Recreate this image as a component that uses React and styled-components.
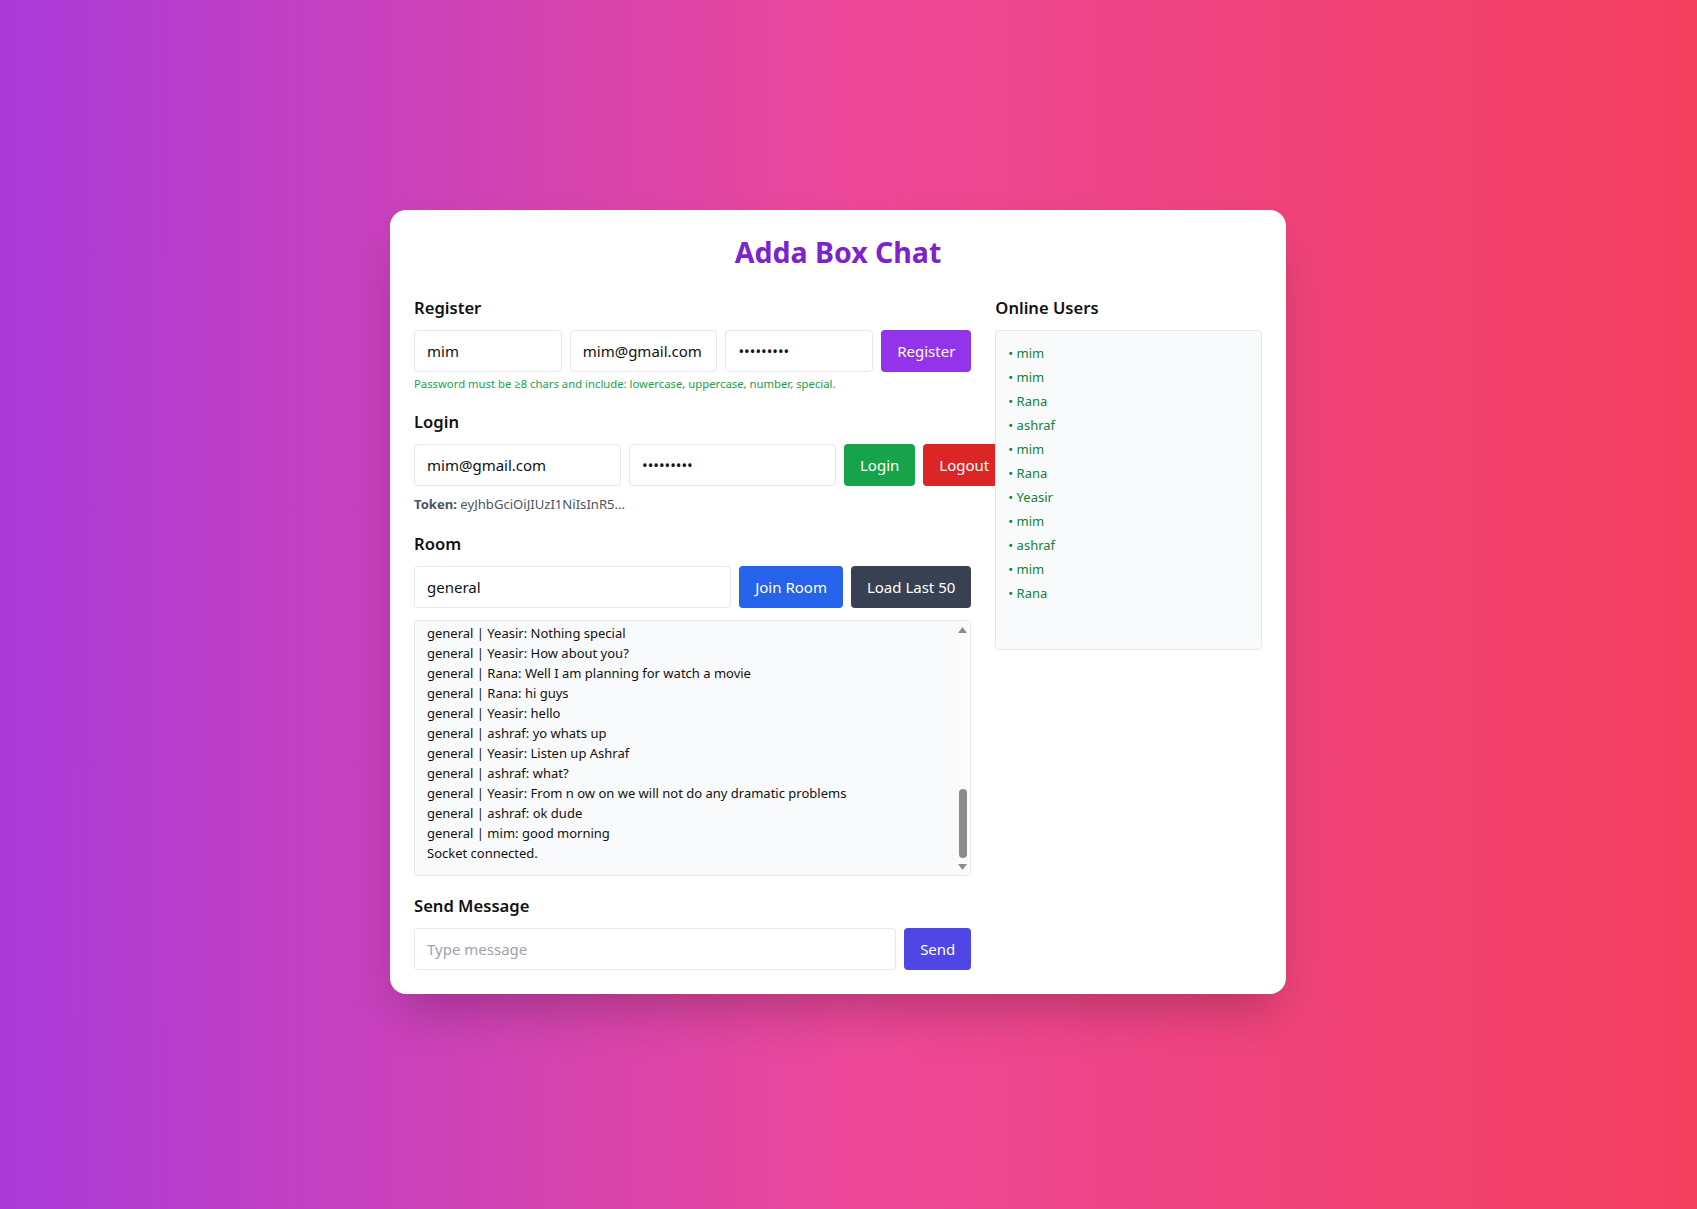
import React from "react";
import styled, { createGlobalStyle } from "styled-components";

const GlobalStyle = createGlobalStyle`
  *, *::before, *::after { box-sizing: border-box; }
  html, body { margin: 0; padding: 0; }
  body {
    font-family: "Noto Sans", "Open Sans", sans-serif;
    color: #111111;
  }
`;

const Page = styled.div`
  min-height: 100vh;
  display: flex;
  align-items: center;
  justify-content: center;
  padding: 0 21px 5px 0;
  background: linear-gradient(to right, #aa3bd9 0%, #ec4899 50%, #f43f5e 100%);
`;

const Card = styled.div`
  width: 896px;
  background: #ffffff;
  border-radius: 16px;
  padding: 24px;
  box-shadow: 0 25px 50px -12px rgba(0, 0, 0, 0.25);
`;

const Title = styled.h1`
  margin: 0 0 24px;
  text-align: center;
  font-size: 28.5px;
  line-height: 36px;
  font-weight: 700;
  color: #7e22ce;
`;

const Grid = styled.div`
  display: grid;
  grid-template-columns: repeat(3, minmax(0, 1fr));
  gap: 24px;
`;

const LeftCol = styled.div`
  grid-column: span 2;
  min-width: 0;
  display: flex;
  flex-direction: column;
  gap: 16px;
`;

const RightCol = styled.div`
  min-width: 0;
`;

const Section = styled.section``;

const SectionTitle = styled.h2`
  margin: 0 0 8px;
  font-size: 16.6px;
  line-height: 28px;
  font-weight: 600;
  color: #111111;
`;

const Row = styled.div`
  display: flex;
  gap: 8px;
`;

const Input = styled.input`
  flex: ${(p) => (p.$fixed ? `1 0 ${p.$fixed}px` : "1 1 0%")};
  min-width: 0;
  height: 42px;
  padding: 8px 12px;
  border: 1px solid #e5e7eb;
  border-radius: 4px;
  font-family: inherit;
  font-size: 15px;
  line-height: 24px;
  color: #111111;
  background: #ffffff;
  outline: none;
  &::placeholder { color: #9ca3af; }
`;

const Button = styled.button`
  flex: 0 0 auto;
  height: 42px;
  padding: 8px 16px;
  border: none;
  border-radius: 4px;
  font-family: inherit;
  font-size: 15px;
  line-height: 24px;
  color: #ffffff;
  background: ${(p) => p.$bg};
  cursor: pointer;
  white-space: nowrap;
`;

const Hint = styled.p`
  margin: 4px 0 0;
  font-size: 11.3px;
  line-height: 16px;
  color: #16a34a;
`;

const Token = styled.p`
  margin: 8px 0 0;
  font-size: 13.1px;
  line-height: 20px;
  color: #4b5563;
  & strong { font-weight: 700; }
`;

const MessageBox = styled.div`
  position: relative;
  margin-top: 12px;
  height: 256px;
  overflow: hidden;
  background: #f9fafb;
  border: 1px solid #e5e7eb;
  border-radius: 4px;
`;

const MessageList = styled.div`
  height: 100%;
  padding: 12px 27px 12px 12px;
  display: flex;
  flex-direction: column;
  justify-content: flex-end;
  font-size: 13px;
  line-height: 20px;
  color: #111111;
`;

const MessageLine = styled.div`
  white-space: nowrap;
  flex: 0 0 auto;
`;

const ScrollTrack = styled.div`
  position: absolute;
  top: 0;
  right: 0;
  bottom: 0;
  width: 15px;
  background: #fbfbfb;
  display: flex;
  flex-direction: column;
  align-items: center;
`;

const ScrollArrow = styled.svg`
  flex: 0 0 auto;
  display: block;
  margin: ${(p) => (p.$down ? "3px 0 5px" : "6px 0 3px")};
`;

const ScrollSpace = styled.div`
  flex: 1 1 auto;
  width: 100%;
  display: flex;
  flex-direction: column;
  justify-content: flex-end;
  align-items: center;
`;

const ScrollThumb = styled.div`
  width: 8px;
  height: 69px;
  margin-bottom: 3px;
  border-radius: 4px;
  background: #8c8c8c;
`;

const UserBox = styled.ul`
  margin: 0;
  list-style: none;
  height: 320px;
  overflow-y: auto;
  padding: 12px;
  background: #f9fafb;
  border: 1px solid #e5e7eb;
  border-radius: 4px;
`;

const UserItem = styled.li`
  font-size: 13px;
  line-height: 20px;
  color: #15803d;
  & + & { margin-top: 4px; }
`;

const messages = [
  "general | Yeasir: Nothing special",
  "general | Yeasir: How about you?",
  "general | Rana: Well I am planning for watch a movie",
  "general | Rana: hi guys",
  "general | Yeasir: hello",
  "general | ashraf: yo whats up",
  "general | Yeasir: Listen up Ashraf",
  "general | ashraf: what?",
  "general | Yeasir: From n ow on we will not do any dramatic problems",
  "general | ashraf: ok dude",
  "general | mim: good morning",
  "Socket connected.",
];

const users = ["mim", "mim", "Rana", "ashraf", "mim", "Rana", "Yeasir", "mim", "ashraf", "mim", "Rana"];

export default function App() {
  return (
    <>
      <GlobalStyle />
      <Page>
        <Card>
          <Title>Adda Box Chat</Title>
          <Grid>
            <LeftCol>
              <Section>
                <SectionTitle>Register</SectionTitle>
                <Row>
                  <Input defaultValue="mim" />
                  <Input defaultValue="mim@gmail.com" />
                  <Input type="password" defaultValue="Abcdef1@x" />
                  <Button $bg="#9333ea">Register</Button>
                </Row>
                <Hint>Password must be ≥8 chars and include: lowercase, uppercase, number, special.</Hint>
              </Section>

              <Section>
                <SectionTitle>Login</SectionTitle>
                <Row>
                  <Input $fixed={207} defaultValue="mim@gmail.com" />
                  <Input $fixed={207} type="password" defaultValue="Abcdef1@x" />
                  <Button $bg="#16a34a">Login</Button>
                  <Button $bg="#dc2626">Logout</Button>
                </Row>
                <Token>
                  <strong>Token:</strong> eyJhbGciOiJIUzI1NiIsInR5...
                </Token>
              </Section>

              <Section>
                <SectionTitle>Room</SectionTitle>
                <Row>
                  <Input defaultValue="general" />
                  <Button $bg="#2563eb">Join Room</Button>
                  <Button $bg="#374151">Load Last 50</Button>
                </Row>
                <MessageBox>
                  <MessageList>
                    {messages.map((m, i) => (
                      <MessageLine key={i}>{m}</MessageLine>
                    ))}
                  </MessageList>
                  <ScrollTrack>
                    <ScrollArrow width="9" height="6" viewBox="0 0 9 6">
                      <polygon points="4.5,0 9,6 0,6" fill="#8c8c8c" />
                    </ScrollArrow>
                    <ScrollSpace>
                      <ScrollThumb />
                    </ScrollSpace>
                    <ScrollArrow $down width="9" height="6" viewBox="0 0 9 6">
                      <polygon points="0,0 9,0 4.5,6" fill="#8c8c8c" />
                    </ScrollArrow>
                  </ScrollTrack>
                </MessageBox>
              </Section>

              <Section>
                <SectionTitle>Send Message</SectionTitle>
                <Row>
                  <Input placeholder="Type message" />
                  <Button $bg="#4f46e5">Send</Button>
                </Row>
              </Section>
            </LeftCol>

            <RightCol>
              <SectionTitle>Online Users</SectionTitle>
              <UserBox>
                {users.map((u, i) => (
                  <UserItem key={i}>• {u}</UserItem>
                ))}
              </UserBox>
            </RightCol>
          </Grid>
        </Card>
      </Page>
    </>
  );
}
